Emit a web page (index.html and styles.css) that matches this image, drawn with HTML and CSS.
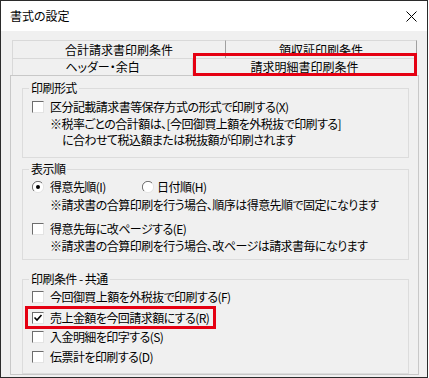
FILE: index.html
```html
<!DOCTYPE html>
<html lang="ja">
<head>
<meta charset="utf-8">
<title>書式の設定</title>
<link rel="stylesheet" href="styles.css">
</head>
<body>
<div class="window">
  <div class="titlebar">
    <span class="title">書式の設定</span>
    <svg class="close" width="11" height="11" viewBox="0 0 11 11"><path d="M0.5 0.5 L10.5 10.5 M10.5 0.5 L0.5 10.5" stroke="#000" stroke-width="1" fill="none"/></svg>
  </div>
  <div class="body">
    <div class="tabs">
      <div class="tabrow back">
        <div class="tab t1">合計請求書印刷条件</div>
        <div class="tab t2">領収証印刷条件</div>
      </div>
      <div class="tabrow front">
        <div class="tab t3">ヘッダー・余白</div>
        <div class="tab t4 selected">請求明細書印刷条件</div>
      </div>
    </div>
    <div class="panel">
      <fieldset class="group g1">
        <legend>印刷形式</legend>
        <div class="opt"><span class="cb"></span><span>区分記載請求書等保存方式の形式で印刷する(X)</span></div>
        <div class="note hang">※税率ごとの合計額は、[今回御買上額を外税抜で印刷する]<br>に合わせて税込額または税抜額が印刷されます</div>
      </fieldset>
      <fieldset class="group g2">
        <legend>表示順</legend>
        <div class="opt radios">
          <span class="ropt first">
            <svg class="rb" width="12" height="12" viewBox="0 0 12 12"><circle cx="6" cy="6" r="5.5" fill="#fff"/><path d="M10 2 A5.5 5.5 0 0 0 2 10" stroke="#6d6d6d" fill="none"/><path d="M2 10 A5.5 5.5 0 0 0 10 2" stroke="#e3e3e3" fill="none"/><circle cx="6" cy="6" r="2" fill="#000"/></svg>
            <span>得意先順(I)</span>
          </span>
          <span class="ropt second">
            <svg class="rb" width="12" height="12" viewBox="0 0 12 12"><circle cx="6" cy="6" r="5.5" fill="#fff"/><path d="M10 2 A5.5 5.5 0 0 0 2 10" stroke="#6d6d6d" fill="none"/><path d="M2 10 A5.5 5.5 0 0 0 10 2" stroke="#e3e3e3" fill="none"/></svg>
            <span>日付順(H)</span>
          </span>
        </div>
        <div class="note n1">※請求書の合算印刷を行う場合、順序は得意先順で固定になります</div>
        <div class="opt o2"><span class="cb"></span><span>得意先毎に改ページする(E)</span></div>
        <div class="note n2">※請求書の合算印刷を行う場合、改ページは請求書毎になります</div>
      </fieldset>
      <fieldset class="group g3">
        <legend>印刷条件 - 共通</legend>
        <div class="opt r1"><span class="cb"></span><span>今回御買上額を外税抜で印刷する(F)</span></div>
        <div class="opt r2"><span class="cb checked"><svg width="10" height="10" viewBox="0 0 10 10"><path d="M1.5 4.5 L4 7 L8.5 2" stroke="#000" stroke-width="1.6" fill="none"/></svg></span><span>売上金額を今回請求額にする(R)</span></div>
        <div class="opt r3"><span class="cb"></span><span>入金明細を印字する(S)</span></div>
        <div class="opt r4"><span class="cb"></span><span>伝票計を印刷する(D)</span></div>
      </fieldset>
    </div>
  </div>
  <div class="mark mark-tab"></div>
  <div class="mark mark-opt"></div>
</div>
</body>
</html>
```

FILE: styles.css
```css
html, body {
  margin: 0;
  padding: 0;
  background: #ffffff;
}

.window {
  position: relative;
  width: 428px;
  height: 378px;
  box-sizing: border-box;
  border: 1px solid #2b2b2b;
  background: #f0f0f0;
  font-family: "Noto Sans CJK JP", "Noto Sans", sans-serif;
  font-size: 12px;
  font-feature-settings: "palt";
  color: #000;
  overflow: hidden;
}

.titlebar {
  height: 30px;
  background: #ffffff;
  display: flex;
  align-items: center;
  padding-left: 9px;
  padding-right: 10px;
}

.title {
  font-size: 12px;
  line-height: 16px;
}

.close {
  margin-left: auto;
  display: block;
}

.body {
  padding: 9px 0 0 9px;
}

.tabs {
  margin-left: 2px;
}

.tabrow {
  display: flex;
}

.tab {
  box-sizing: border-box;
  display: flex;
  align-items: center;
  justify-content: center;
  border: 1px solid #d9d9d9;
  border-bottom: none;
  background: #f0f0f0;
  line-height: 14px;
}

.back .tab {
  height: 18px;
}

.front .tab {
  height: 17px;
}

.t1 { width: 214px; border-right: 1px solid #a0a0a0; }
.t2 { width: 191px; border-left: none; border-right: 1px solid #a0a0a0; }
.t3 { width: 181px; }
.t4 { width: 224px; border-left: none; }

.panel {
  box-sizing: border-box;
  width: 409px;
  height: 300px;
  border: 1px solid #c8c8c8;
  padding: 4px 9px 0 11px;
  letter-spacing: -0.55px;
}

.group {
  margin: 0;
  min-width: 0;
  border: 1px solid #dcdcdc;
  padding: 2px 0 9px 9px;
}

.group legend {
  padding: 0 2px;
  margin-left: -3px;
  line-height: 16px;
}

.g2 {
  margin-top: 3px;
  padding-top: 1px;
  padding-bottom: 5px;
}

.g3 {
  margin-top: 11px;
  padding-top: 0;
  padding-bottom: 4px;
}

.opt {
  display: flex;
  align-items: center;
  gap: 6px;
  height: 18px;
  line-height: 16px;
}

.cb {
  box-sizing: border-box;
  width: 12px;
  height: 12px;
  background: #ffffff;
  border-top: 1px solid #6d6d6d;
  border-left: 1px solid #6d6d6d;
  border-right: 1px solid #e3e3e3;
  border-bottom: 1px solid #e3e3e3;
  display: flex;
  align-items: center;
  justify-content: center;
  flex: none;
}

.cb svg {
  display: block;
}

.radios {
  gap: 0;
}

.ropt {
  display: flex;
  align-items: center;
  gap: 6px;
}

.ropt.first {
  width: 110px;
}

.ropt.second {
  gap: 3px;
}

.rb {
  display: block;
  flex: none;
}

.note {
  padding-left: 18px;
  line-height: 16px;
}

.hang {
  padding-left: 30px;
  text-indent: -12px;
}

.n1 {
  margin-top: 1px;
}

.o2 {
  margin-top: 7px;
}

.n2 {
  margin-top: 0;
}

.r1 { height: 20px; }
.r2 { height: 22px; }
.r3 { height: 16px; }
.r4 { height: 24px; }

.mark {
  position: absolute;
  box-sizing: border-box;
  border: 3px solid #e50012;
}

.mark-tab {
  left: 192px;
  top: 52px;
  width: 224px;
  height: 23px;
}

.mark-opt {
  left: 24px;
  top: 305px;
  width: 191px;
  height: 23px;
}
```
